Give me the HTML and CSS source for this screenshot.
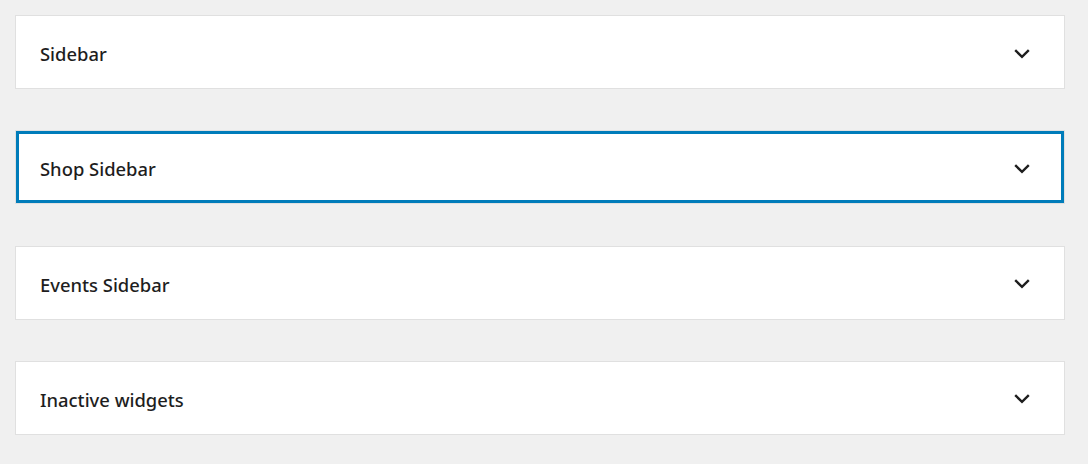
FILE: index.html
```html
<!DOCTYPE html>
<html lang="en">
<head>
    <meta charset="UTF-8">
    <title>Widgets</title>
    <link rel="stylesheet" href="styles.css">
</head>
<body>
    <div class="areas">
        <div class="area">
            <h2 class="area-title">Sidebar</h2>
            <span class="toggle"><svg viewBox="0 0 16 10" width="16" height="10"><polyline points="1.2,1.2 8,7.8 14.8,1.2"/></svg></span>
        </div>
        <div class="area is-focused">
            <h2 class="area-title">Shop Sidebar</h2>
            <span class="toggle"><svg viewBox="0 0 16 10" width="16" height="10"><polyline points="1.2,1.2 8,7.8 14.8,1.2"/></svg></span>
        </div>
        <div class="area">
            <h2 class="area-title">Events Sidebar</h2>
            <span class="toggle"><svg viewBox="0 0 16 10" width="16" height="10"><polyline points="1.2,1.2 8,7.8 14.8,1.2"/></svg></span>
        </div>
        <div class="area">
            <h2 class="area-title">Inactive widgets</h2>
            <span class="toggle"><svg viewBox="0 0 16 10" width="16" height="10"><polyline points="1.2,1.2 8,7.8 14.8,1.2"/></svg></span>
        </div>
    </div>
</body>
</html>
```
FILE: styles.css
```css
/* Global */
body {
    margin: 0;
    background: #f0f0f0;
    font-family: "Noto Sans", "Open Sans", sans-serif;
    color: #1e1e1e;
}

.areas {
    width: 1050px;
    padding: 15px;
    display: flex;
    flex-direction: column;
    gap: 41.33px;
}

/* Widget area panels */
.area {
    box-sizing: border-box;
    height: 74px;
    background: #fff;
    border: 1px solid #e0e0e0;
    display: flex;
    align-items: center;
    justify-content: space-between;
    padding: 3px 34px 0 24px;
}

.area.is-focused {
    box-shadow: inset 0 0 0 3px #007cba;
}

.area-title {
    margin: 0;
    font-size: 18.4px;
    font-weight: 500;
}

.toggle {
    display: flex;
}

.toggle svg {
    fill: none;
    stroke: #1e1e1e;
    stroke-width: 2.4;
}
```
